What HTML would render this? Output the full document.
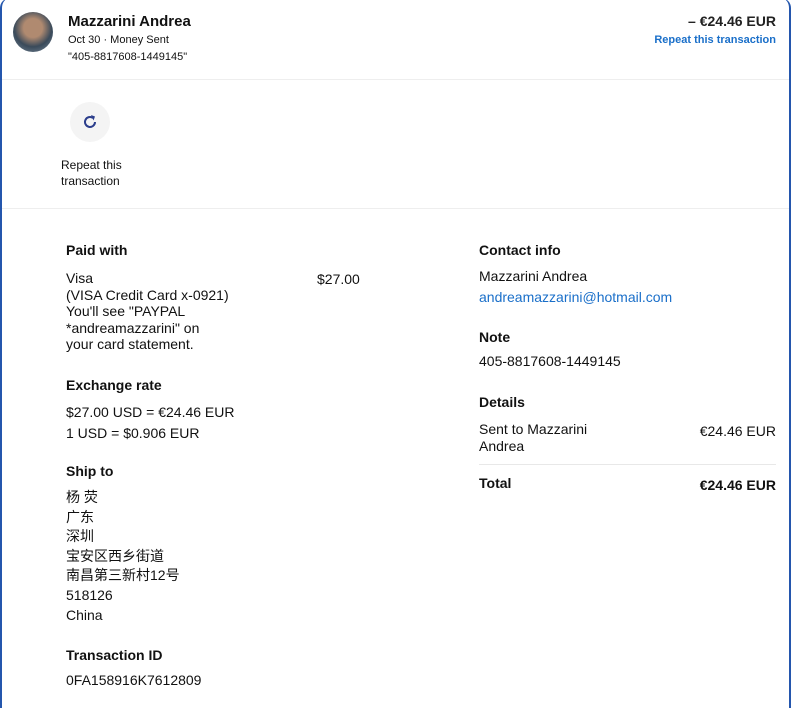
<!DOCTYPE html><html style="overflow:hidden;height:708px"><head><style>
body{margin:0;width:800px;height:708px;background:#fff;font-family:"Liberation Sans",sans-serif;color:#111;position:relative;overflow:hidden}
.box{position:absolute;left:0;top:-2px;width:791px;height:730px;border:2px solid #2456ad;border-top:none;border-radius:10px;box-sizing:border-box}
.a{position:absolute;white-space:nowrap}
.b{font-weight:bold}
.s{font-size:14px;line-height:17px}
.blue{color:#1a6fc9}
</style></head><body>
<div class="box"></div>
<div class="a" style="left:13px;top:12px;width:40px;height:40px;border-radius:50%;background:radial-gradient(circle at 50% 40%,#b08a70 0 30%,#3a4a5a 60%,#7a8c9c)"></div>
<div class="a b" style="left:68px;top:13px;font-size:15px">Mazzarini Andrea</div>
<div class="a" style="left:68px;top:34px;font-size:11px">Oct 30 · Money Sent</div>
<div class="a" style="left:68px;top:51px;font-size:11px">"405-8817608-1449145"</div>
<div class="a b" style="right:24px;top:13px;font-size:14px;color:#222">– €24.46 EUR</div>
<div class="a b blue" style="right:24px;top:34px;font-size:11px">Repeat this transaction</div>
<div class="a" style="left:2px;top:79px;width:787px;border-top:1px solid #eee"></div>
<div class="a" style="left:70px;top:102px;width:40px;height:40px;border-radius:50%;background:#f4f4f4"></div>
<svg class="a" style="left:81px;top:113px" width="18" height="18" viewBox="0 0 18 18"><path d="M14 9a5 5 0 1 1-2-4" fill="none" stroke="#2c3e8c" stroke-width="2"/><path d="M10 2l4 1.5-1.5 4z" fill="#2c3e8c"/></svg>
<div class="a" style="left:61px;top:157px;font-size:12px;line-height:16px">Repeat this<br>transaction</div>
<div class="a" style="left:2px;top:208px;width:787px;border-top:1px solid #eee"></div>
<div class="a b s" style="left:66px;top:242px">Paid with</div>
<div class="a s" style="left:66px;top:270px;line-height:16.5px">Visa<br>(VISA Credit Card x-0921)<br>You'll see "PAYPAL<br>*andreamazzarini" on<br>your card statement.</div>
<div class="a s" style="left:317px;top:271px">$27.00</div>
<div class="a b s" style="left:66px;top:377px">Exchange rate</div>
<div class="a s" style="left:66px;top:402px;line-height:21px">$27.00 USD = €24.46 EUR<br>1 USD = $0.906 EUR</div>
<div class="a b s" style="left:66px;top:463px">Ship to</div>
<div class="a s" style="left:66px;top:488px;line-height:19.6px;font-family:'Liberation Sans','Noto Sans CJK SC',sans-serif">杨 荧<br>广东<br>深圳<br>宝安区西乡街道<br>南昌第三新村12号<br>518126<br>China</div>
<div class="a b s" style="left:66px;top:647px">Transaction ID</div>
<div class="a s" style="left:66px;top:672px">0FA158916K7612809</div>
<div class="a b s" style="left:479px;top:242px">Contact info</div>
<div class="a s" style="left:479px;top:268px">Mazzarini Andrea</div>
<div class="a s blue" style="left:479px;top:289px">andreamazzarini@hotmail.com</div>
<div class="a b s" style="left:479px;top:329px">Note</div>
<div class="a s" style="left:479px;top:353px">405-8817608-1449145</div>
<div class="a b s" style="left:479px;top:394px">Details</div>
<div class="a s" style="left:479px;top:421px;line-height:16.5px">Sent to Mazzarini<br>Andrea</div>
<div class="a s" style="right:24px;top:423px">€24.46 EUR</div>
<div class="a" style="left:479px;top:464px;width:297px;border-top:1px solid #e8e8e8"></div>
<div class="a b s" style="left:479px;top:475px">Total</div>
<div class="a b s" style="right:24px;top:477px">€24.46 EUR</div>
</body></html>
